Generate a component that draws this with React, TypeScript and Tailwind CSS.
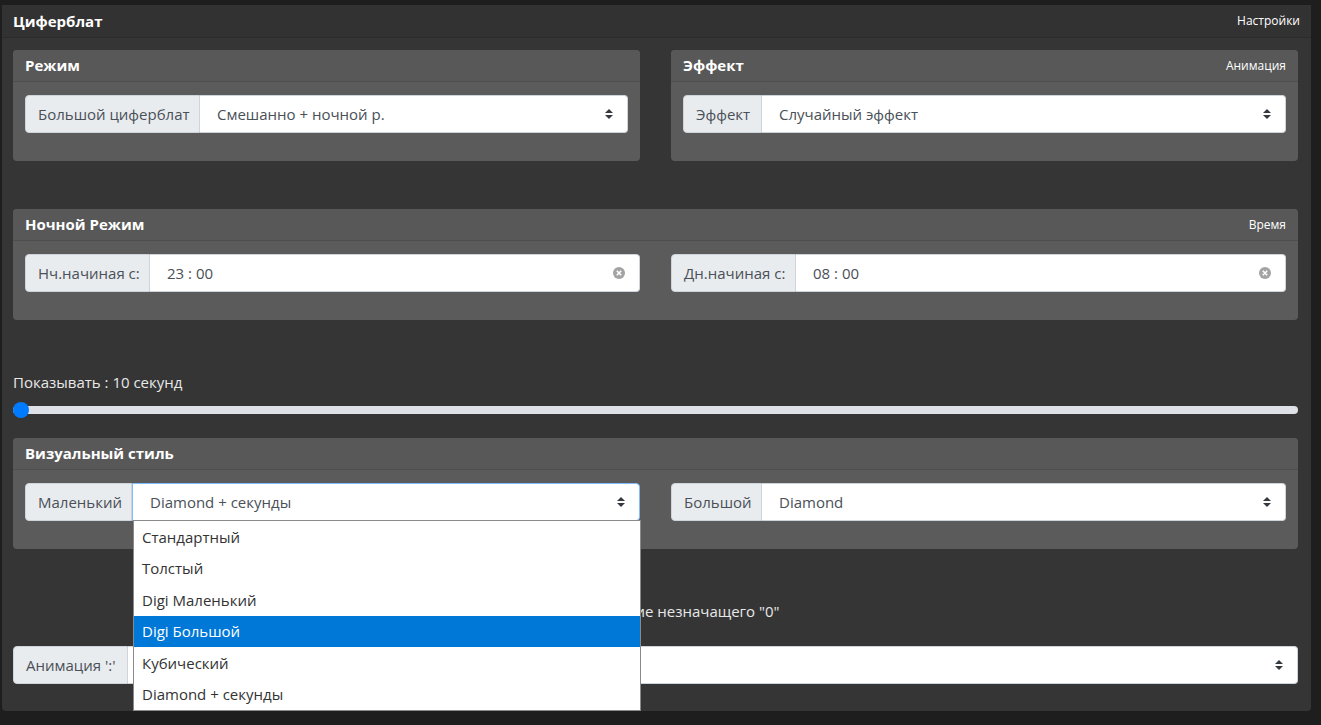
import React from "react";

function Caret() {
  return (
    <svg width="8" height="10" viewBox="0 0 8 10" className="shrink-0">
      <path d="M4 0L8 4H0Z" fill="#343a40" />
      <path d="M4 10L0 6H8Z" fill="#343a40" />
    </svg>
  );
}

function ClearIcon() {
  return (
    <svg width="12" height="12" viewBox="0 0 12 12" className="shrink-0">
      <circle cx="6" cy="6" r="6" fill="#a3a3a3" />
      <path d="M3.8 3.8L8.2 8.2M8.2 3.8L3.8 8.2" stroke="#fff" strokeWidth="1.6" />
    </svg>
  );
}

interface GroupProps {
  label: string;
  labelW: string;
  value?: string;
  kind: "select" | "time";
  focus?: boolean;
}

function InputGroup({ label, labelW, value, kind, focus = false }: GroupProps) {
  return (
    <div className="flex h-[38px] w-full">
      <div
        className={`${labelW} shrink-0 flex items-center pl-[12px] bg-[#e9ecef] text-[#495057] border border-[#ced4da] rounded-l-[4px] whitespace-nowrap`}
      >
        {label}
      </div>
      <div
        className={`flex-1 flex items-center justify-between bg-white text-[#495057] rounded-r-[4px] border ${
          focus ? "border-[#80bdff]" : "border-[#ced4da] border-l-0"
        } pl-[17px] pr-[14px]`}
      >
        <span className="whitespace-nowrap">{value}</span>
        {kind === "select" ? <Caret /> : <ClearIcon />}
      </div>
    </div>
  );
}

function Card({
  title,
  note,
  children,
}: {
  title: string;
  note?: string;
  children: React.ReactNode;
}) {
  return (
    <div className="rounded-[4px] bg-[#5b5b5b] overflow-hidden">
      <div className="h-[32px] flex items-center justify-between px-[12px] bg-[#585858] border-b border-[#4e4e4e]">
        <span className="font-bold text-[15px] text-white">{title}</span>
        {note && <span className="text-[12px] text-white">{note}</span>}
      </div>
      <div className="px-[12px] pt-[13px] pb-[28px]">{children}</div>
    </div>
  );
}

const styles = ["Стандартный", "Толстый", "Digi Маленький", "Digi Большой", "Кубический", "Diamond + секунды"];

export default function App() {
  return (
    <div className="min-h-screen bg-[#1e1e1e] pt-[5px] pl-[2px] font-['Open_Sans',sans-serif] text-[15px]">
      <div className="w-[1309px] rounded-[4px] bg-[#353535]">
        {/* Header */}
        <div className="h-[33px] flex items-center justify-between pl-[11px] pr-[11px] bg-[#323232] border-b border-[#2b2b2b]">
          <span className="font-bold text-[15px] text-white">Циферблат</span>
          <span className="text-[12px] text-white">Настройки</span>
        </div>

        <div className="pl-[11px] pr-[13px] pt-[12px] pb-[27px]">
          <div className="grid grid-cols-2 gap-[31px]">
            <Card title="Режим">
              <InputGroup label="Большой циферблат" labelW="w-[175px]" value="Смешанно + ночной р." kind="select" />
            </Card>
            <Card title="Эффект" note="Анимация">
              <InputGroup label="Эффект" labelW="w-[79px]" value="Случайный эффект" kind="select" />
            </Card>
          </div>

          <div className="mt-[48px]">
            <Card title="Ночной Режим" note="Время">
              <div className="grid grid-cols-2 gap-[31px]">
                <InputGroup label="Нч.начиная с:" labelW="w-[125px]" value="23 : 00" kind="time" />
                <InputGroup label="Дн.начиная с:" labelW="w-[125px]" value="08 : 00" kind="time" />
              </div>
            </Card>
          </div>

          <div className="mt-[52px] h-[20px] leading-[20px] text-[#e8e8e8]">Показывать : 10 секунд</div>
          <div className="mt-[10px] h-[16px] relative flex items-center">
            <div className="w-full h-[8px] rounded-full bg-[#dee2e6]" />
            <div className="absolute left-0 top-0 w-[16px] h-[16px] rounded-full bg-[#007bff]" />
          </div>

          <div className="mt-[20px] relative">
            <Card title="Визуальный стиль">
              <div className="grid grid-cols-2 gap-[31px]">
                <InputGroup label="Маленький" labelW="w-[107px]" value="Diamond + секунды" kind="select" focus />
                <InputGroup label="Большой" labelW="w-[91px]" value="Diamond" kind="select" />
              </div>
            </Card>
            {/* Open dropdown list */}
            <div className="absolute left-[120px] top-[82px] w-[508px] bg-white border border-[#8a8a8a] z-10">
              {styles.map((s) => (
                <div
                  key={s}
                  className={`h-[31.5px] flex items-center pl-[8px] whitespace-nowrap ${
                    s === "Digi Большой" ? "bg-[#0078d7] text-white" : "text-[#333]"
                  }`}
                >
                  {s}
                </div>
              ))}
            </div>
          </div>

          <div className="mt-[52px] h-[20px] flex items-center justify-center gap-[8px] text-[#e8e8e8] pl-[10px]">
            <span className="w-[14px] h-[14px] rounded-[3px] bg-white" />
            <span>Подавление незначащего "0"</span>
          </div>

          <div className="mt-[25px]">
            <div className="flex h-[38px] w-full">
              <div className="w-[115px] shrink-0 flex items-center pl-[12px] bg-[#e9ecef] text-[#495057] border border-[#ced4da] rounded-l-[4px] whitespace-nowrap">
                Анимация ':'
              </div>
              <div className="flex-1 flex items-center justify-end bg-white rounded-r-[4px] border border-[#ced4da] border-l-0 pr-[14px]">
                <Caret />
              </div>
            </div>
          </div>
        </div>
      </div>
    </div>
  );
}
